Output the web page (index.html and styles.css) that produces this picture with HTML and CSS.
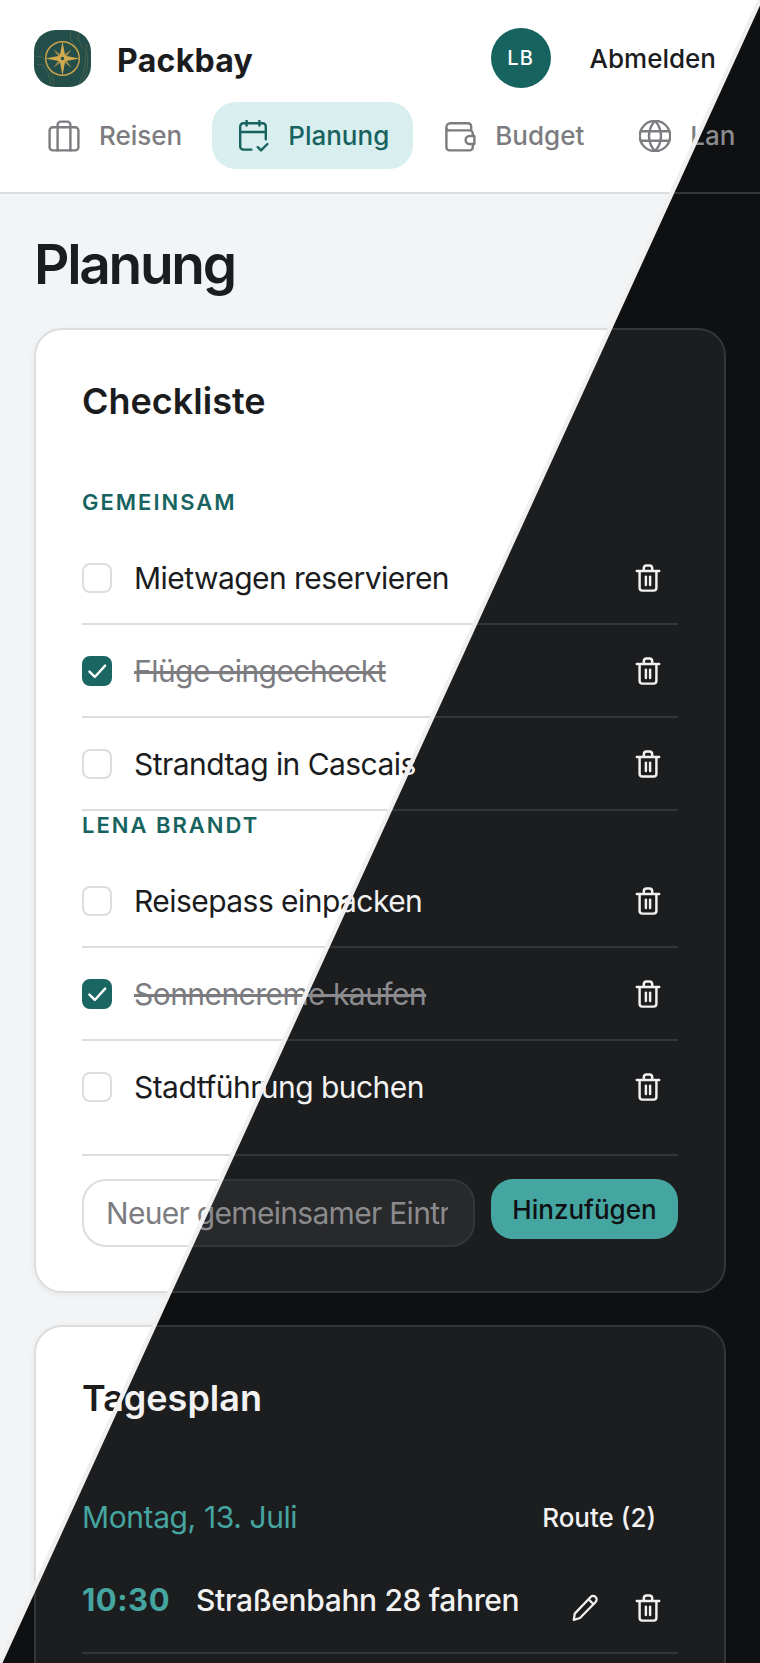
FILE: index.html
```html
<!DOCTYPE html>
<html lang="de">
<head>
    <meta charset="UTF-8">
    <meta name="viewport" content="width=device-width, initial-scale=1.0">
    <title>Packbay - Planung</title>
    <link rel="stylesheet" href="styles.css">
</head>
<body>

    <!-- icons used by both themes -->
    <svg class="icon-sheet" xmlns="http://www.w3.org/2000/svg">
        <symbol id="i-case" viewBox="2 2 20 20">
            <rect x="3" y="6.500" width="18" height="14.500" rx="2"/>
            <path d="M8 21V5a2 2 0 0 1 2-2h4a2 2 0 0 1 2 2v16"/>
        </symbol>
        <symbol id="i-calendar" viewBox="2 2 20 20">
            <path d="M11 20.500H6a2 2 0 0 1-2-2V6a2 2 0 0 1 2-2h12a2 2 0 0 1 2 2v8"/>
            <path d="M16 2.500v3M8 2.500v3M4 9.500h16M15 19l2 2 4-4"/>
        </symbol>
        <symbol id="i-wallet" viewBox="2 2 20 20">
            <path d="M19 8V6a2 2 0 0 0-2-2H6a2.500 2.500 0 0 0-2.500 2.500V19a2 2 0 0 0 2 2H18a2 2 0 0 0 2-2v-2"/>
            <path d="M3.500 7.500a2 2 0 0 0 2 1H18a2 2 0 0 1 2 2V12"/>
            <path d="M21 12v5h-3a2.500 2.500 0 0 1 0-5z"/>
        </symbol>
        <symbol id="i-globe" viewBox="2 2 20 20">
            <circle cx="12" cy="12" r="9.500"/>
            <path d="M3 9h18M3 15h18M12 2.500c-5 5.500-5 13.500 0 19M12 2.500c5 5.500 5 13.500 0 19"/>
        </symbol>
        <symbol id="i-trash" viewBox="3 2 18 20">
            <path d="M4 7h16M6 7v12a2 2 0 0 0 2 2h8a2 2 0 0 0 2-2V7M9 7V5a2 2 0 0 1 2-2h2a2 2 0 0 1 2 2v2M10.500 11v6M13.500 11v6"/>
        </symbol>
        <symbol id="i-pencil" viewBox="0 0 24 24">
            <path d="M3 21.500l.8-5L16.500 3.200a2.800 2.800 0 0 1 4 4L8 20z"/>
            <path d="M14.800 5l4 4"/>
        </symbol>
        <symbol id="i-check" viewBox="0 0 24 24">
            <path d="M5 12.500l5 5L19.500 7"/>
        </symbol>
        <symbol id="i-logo" viewBox="0 0 56 56">
            <rect width="56" height="56" rx="21" fill="#234e49" stroke="none"/>
            <g fill="none" stroke="#b59a4e" stroke-opacity=".35" stroke-width=".7">
                <path d="M3 34c7-2 11 6 14 20M2 26c8-2 14 8 18 28M36 2c-2 8 3 10 6 16M44 3c-2 7 2 11 5 16M52 14c-2 8 0 28-8 38M46 54c6-8 8-22 6-32"/>
            </g>
            <circle cx="28" cy="28" r="16.500" fill="none" stroke="#c9a24c" stroke-width="1.400"/>
            <path d="M19 19l9 6.500 9-6.500-6.500 9 6.500 9-9-6.500-9 6.500 6.500-9z" fill="#a98d48" stroke="none"/>
            <path d="M28 11l2.600 14.400 14.400 2.600-14.400 2.600-2.600 14.400-2.600-14.400-14.400-2.600 14.400-2.600z" fill="#d1a94f" stroke="none"/>
            <circle cx="28" cy="28" r="2.200" fill="#234e49" stroke="#d1a94f" stroke-width="1"/>
        </symbol>
    </svg>

    <div class="screen">

        <div class="page light">
            <header class="topbar">
                <div class="topbar-row">
                    <svg class="logo"><use href="#i-logo"/></svg>
                    <span class="brand">Packbay</span>
                    <span class="avatar">LB</span>
                    <button class="logout">Abmelden</button>
                </div>
                <nav class="tabs">
                    <a class="tab"><svg class="icon"><use href="#i-case"/></svg>Reisen</a>
                    <a class="tab active"><svg class="icon"><use href="#i-calendar"/></svg>Planung</a>
                    <a class="tab"><svg class="icon"><use href="#i-wallet"/></svg>Budget</a>
                    <a class="tab"><svg class="icon"><use href="#i-globe"/></svg>Lan</a>
                </nav>
            </header>
            <main class="content">
                <h1>Planung</h1>
                <section class="card">
                    <h2>Checkliste</h2>
                    <h3 class="group-label">Gemeinsam</h3>
                    <ul class="checklist">
                        <li class="check-row"><span class="box"></span><span class="check-text">Mietwagen reservieren</span><svg class="trash"><use href="#i-trash"/></svg></li>
                        <li class="check-row done"><span class="box"><svg class="tick"><use href="#i-check"/></svg></span><span class="check-text">Flüge eingecheckt</span><svg class="trash"><use href="#i-trash"/></svg></li>
                        <li class="check-row"><span class="box"></span><span class="check-text">Strandtag in Cascais</span><svg class="trash"><use href="#i-trash"/></svg></li>
                    </ul>
                    <h3 class="group-label">Lena Brandt</h3>
                    <ul class="checklist last">
                        <li class="check-row"><span class="box"></span><span class="check-text">Reisepass einpacken</span><svg class="trash"><use href="#i-trash"/></svg></li>
                        <li class="check-row done"><span class="box"><svg class="tick"><use href="#i-check"/></svg></span><span class="check-text">Sonnencreme kaufen</span><svg class="trash"><use href="#i-trash"/></svg></li>
                        <li class="check-row"><span class="box"></span><span class="check-text">Stadtführung buchen</span><svg class="trash"><use href="#i-trash"/></svg></li>
                    </ul>
                    <form class="add-form">
                        <input type="text" placeholder="Neuer gemeinsamer Eintrag">
                        <button type="button">Hinzufügen</button>
                    </form>
                </section>
                <section class="card">
                    <h2>Tagesplan</h2>
                    <div class="day-head">
                        <span class="day-name">Montag, 13. Juli</span>
                        <button class="route">Route (2)</button>
                    </div>
                    <div class="plan-row">
                        <span class="plan-time">10:30</span>
                        <span class="plan-text">Straßenbahn 28 fahren</span>
                        <svg class="pencil"><use href="#i-pencil"/></svg>
                        <svg class="trash"><use href="#i-trash"/></svg>
                    </div>
                </section>
            </main>
        </div>

        <!-- same page in dark, cut along the diagonal -->
        <div class="page dark">
            <header class="topbar">
                <div class="topbar-row">
                    <svg class="logo"><use href="#i-logo"/></svg>
                    <span class="brand">Packbay</span>
                    <span class="avatar">LB</span>
                    <button class="logout">Abmelden</button>
                </div>
                <nav class="tabs">
                    <a class="tab"><svg class="icon"><use href="#i-case"/></svg>Reisen</a>
                    <a class="tab active"><svg class="icon"><use href="#i-calendar"/></svg>Planung</a>
                    <a class="tab"><svg class="icon"><use href="#i-wallet"/></svg>Budget</a>
                    <a class="tab"><svg class="icon"><use href="#i-globe"/></svg>Lan</a>
                </nav>
            </header>
            <main class="content">
                <h1>Planung</h1>
                <section class="card">
                    <h2>Checkliste</h2>
                    <h3 class="group-label">Gemeinsam</h3>
                    <ul class="checklist">
                        <li class="check-row"><span class="box"></span><span class="check-text">Mietwagen reservieren</span><svg class="trash"><use href="#i-trash"/></svg></li>
                        <li class="check-row done"><span class="box"><svg class="tick"><use href="#i-check"/></svg></span><span class="check-text">Flüge eingecheckt</span><svg class="trash"><use href="#i-trash"/></svg></li>
                        <li class="check-row"><span class="box"></span><span class="check-text">Strandtag in Cascais</span><svg class="trash"><use href="#i-trash"/></svg></li>
                    </ul>
                    <h3 class="group-label">Lena Brandt</h3>
                    <ul class="checklist last">
                        <li class="check-row"><span class="box"></span><span class="check-text">Reisepass einpacken</span><svg class="trash"><use href="#i-trash"/></svg></li>
                        <li class="check-row done"><span class="box"><svg class="tick"><use href="#i-check"/></svg></span><span class="check-text">Sonnencreme kaufen</span><svg class="trash"><use href="#i-trash"/></svg></li>
                        <li class="check-row"><span class="box"></span><span class="check-text">Stadtführung buchen</span><svg class="trash"><use href="#i-trash"/></svg></li>
                    </ul>
                    <form class="add-form">
                        <input type="text" placeholder="Neuer gemeinsamer Eintrag">
                        <button type="button">Hinzufügen</button>
                    </form>
                </section>
                <section class="card">
                    <h2>Tagesplan</h2>
                    <div class="day-head">
                        <span class="day-name">Montag, 13. Juli</span>
                        <button class="route">Route (2)</button>
                    </div>
                    <div class="plan-row">
                        <span class="plan-time">10:30</span>
                        <span class="plan-text">Straßenbahn 28 fahren</span>
                        <svg class="pencil"><use href="#i-pencil"/></svg>
                        <svg class="trash"><use href="#i-trash"/></svg>
                    </div>
                </section>
            </main>
        </div>

        <svg class="split-line" viewBox="0 0 760 1663"><line x1="760" y1="0" x2="0" y2="1663"/></svg>
    </div>

</body>
</html>
```

FILE: styles.css
```css
/* General Styles */
* {
    box-sizing: border-box;
}

html, body {
    margin: 0;
    padding: 0;
    height: 100%;
    overflow: hidden;
}

body {
    font-family: Inter, 'Noto Sans', sans-serif;
}

.icon-sheet {
    display: none;
}

.screen {
    position: relative;
    width: 760px;
    height: 1663px;
    overflow: hidden;
}

.page {
    width: 760px;
    height: 1663px;
    overflow: hidden;
    background-color: var(--bg);
    color: var(--text);
}

.page.dark {
    position: absolute;
    top: 0;
    left: 0;
    clip-path: polygon(100% 0, 100% 100%, 0 100%);
}

.split-line {
    position: absolute;
    top: 0;
    left: 0;
    width: 760px;
    height: 1663px;
}

.split-line line {
    stroke: #f0f0f0;
    stroke-width: 4.5;
}

/* Themes */
.light {
    --bg: #f2f4f6;
    --surface: #ffffff;
    --text: #1b1c1e;
    --muted: #7c7c80;
    --line: #dcdddf;
    --accent: #17635f;
    --accent-soft: #d9eeee;
    --accent-text: #17635f;
    --on-accent: #ffffff;
    --field: #ffffff;
    --shadow: 0 2px 6px rgba(0, 0, 0, 0.06);
}

.dark {
    --bg: #0f1012;
    --surface: #1c1d1f;
    --text: #f2f2f2;
    --muted: #8b8b8e;
    --line: #333537;
    --accent: #45a5a0;
    --accent-soft: #1b3d3c;
    --accent-text: #45a5a0;
    --on-accent: #0f1012;
    --field: #28292b;
    --shadow: none;
}

/* Header */
.topbar {
    height: 194px;
    padding-top: 28px;
    background-color: var(--surface);
    border-bottom: 2px solid var(--line);
}

.dark .topbar {
    background-color: var(--bg);
}

.topbar-row {
    display: flex;
    align-items: center;
    height: 60px;
    padding: 0 44px 0 34px;
}

.logo {
    width: 57px;
    height: 57px;
    flex: none;
}

.brand {
    margin: 4px 0 0 26px;
    font-size: 32px;
    font-weight: 700;
    letter-spacing: 0.3px;
}

.avatar {
    display: flex;
    align-items: center;
    justify-content: center;
    width: 60px;
    height: 60px;
    margin-left: auto;
    border-radius: 50%;
    background-color: #17635f;
    color: #fff;
    font-size: 20px;
    font-weight: 500;
    letter-spacing: 1px;
}

.logout {
    margin-left: 39px;
    padding: 0;
    border: none;
    background: none;
    color: var(--text);
    font-family: inherit;
    font-size: 26px;
    font-weight: 500;
}

.tabs {
    display: flex;
    gap: 6px;
    margin-top: 14px;
    padding-left: 23px;
}

.tab {
    display: flex;
    align-items: center;
    gap: 19px;
    height: 67px;
    padding: 0 24px 0 25px;
    border-radius: 24px;
    color: var(--muted);
    font-size: 26px;
    font-weight: 500;
    white-space: nowrap;
}

.tab.active {
    background-color: var(--accent-soft);
    color: var(--accent-text);
}

.icon {
    width: 32px;
    height: 32px;
    flex: none;
    fill: none;
    stroke: currentColor;
    stroke-width: 1.5;
    stroke-linecap: round;
    stroke-linejoin: round;
}

/* Content */
.content {
    padding: 0 34px;
}

h1 {
    margin: 0;
    padding-top: 36px;
    height: 134px;
    font-size: 55px;
    line-height: 68px;
    font-weight: 600;
    letter-spacing: -2.3px;
}

.card {
    margin-bottom: 32px;
    padding: 47px 46px 44px;
    background-color: var(--surface);
    border: 2px solid var(--line);
    border-radius: 28px;
    box-shadow: var(--shadow);
}

h2 {
    margin: 0;
    height: 52px;
    font-size: 36px;
    line-height: 48px;
    font-weight: 600;
}

.group-label {
    margin: -1px 0 15px;
    height: 30px;
    color: var(--accent-text);
    font-size: 22px;
    line-height: 30px;
    font-weight: 600;
    letter-spacing: 2px;
    text-transform: uppercase;
}

h2 + .group-label {
    margin-top: 58px;
}

.checklist {
    margin: 0;
    padding: 0;
    list-style: none;
}

.checklist.last .check-row:last-child {
    height: 115px;
    padding-bottom: 22px;
}

.check-row {
    display: flex;
    align-items: center;
    gap: 22px;
    height: 93px;
    border-bottom: 2px solid var(--line);
    font-size: 30px;
    letter-spacing: -0.55px;
}

.box {
    display: flex;
    align-items: center;
    justify-content: center;
    width: 30px;
    height: 30px;
    flex: none;
    background-color: var(--field);
    border: 2px solid var(--line);
    border-radius: 8px;
}

.tick {
    width: 26px;
    height: 26px;
    fill: none;
    stroke: #fff;
    stroke-width: 2.2;
    stroke-linecap: round;
    stroke-linejoin: round;
}

.done .box {
    background-color: #1a6663;
    border-color: #1a6663;
}

.done .check-text {
    color: var(--muted);
    text-decoration: line-through;
}

.check-text {
    flex: 1;
}

.trash {
    width: 26px;
    height: 28px;
    flex: none;
    margin-right: 17px;
    fill: none;
    stroke: var(--text);
    stroke-width: 1.75;
    stroke-linecap: round;
    stroke-linejoin: round;
}

.add-form {
    display: flex;
    align-items: flex-start;
    gap: 16px;
    margin-top: 23px;
}

.add-form input {
    width: 393px;
    height: 68px;
    padding: 0 25px 0 22px;
    background-color: var(--field);
    border: 2px solid var(--line);
    border-radius: 24px;
    color: var(--text);
    font-family: inherit;
    font-size: 30px;
    letter-spacing: -0.7px;
}

.add-form input::placeholder {
    color: var(--muted);
}

.add-form button {
    flex: 1;
    height: 60px;
    padding: 0;
    background-color: var(--accent);
    border: none;
    border-radius: 22px;
    color: var(--on-accent);
    font-family: inherit;
    font-size: 26px;
    font-weight: 500;
}

.day-head {
    display: flex;
    align-items: center;
    justify-content: space-between;
    height: 44px;
    margin-top: 69px;
    padding-right: 22px;
}

.day-name {
    color: var(--accent-text);
    font-size: 30px;
    letter-spacing: -0.4px;
}

.route {
    padding: 0;
    background: none;
    border: none;
    color: var(--text);
    font-family: inherit;
    font-size: 26px;
    font-weight: 500;
}

.plan-row {
    display: flex;
    align-items: center;
    height: 115px;
    padding-top: 8px;
    border-bottom: 2px solid var(--line);
}

.plan-time {
    width: 114px;
    color: var(--accent-text);
    font-size: 31px;
    font-weight: 700;
    letter-spacing: 0.5px;
}

.plan-text {
    flex: 1;
    font-size: 30px;
    font-weight: 500;
    letter-spacing: -0.35px;
}

.pencil {
    width: 30px;
    height: 30px;
    flex: none;
    margin: 16px 35px 0 0;
    fill: none;
    stroke: var(--text);
    stroke-width: 1.8;
    stroke-linecap: round;
    stroke-linejoin: round;
}

.plan-row .trash {
    margin-top: 16px;
}
```
